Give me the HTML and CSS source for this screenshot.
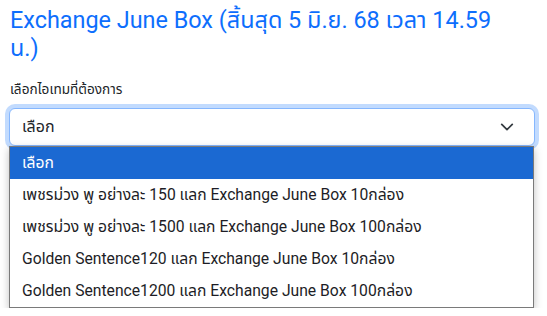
FILE: index.html
```html
<!DOCTYPE html>
<html lang="th">
<head>
    <meta charset="UTF-8">
    <meta name="viewport" content="width=device-width, initial-scale=1.0">
    <title>Exchange June Box</title>
    <link rel="stylesheet" href="styles.css">
</head>
<body>

<div class="container">
    <h4 class="title">Exchange June Box (สิ้นสุด 5 มิ.ย. 68 เวลา 14.59 น.)</h4>

    <!-- Item picker, shown with its list open -->
    <label class="field-label" for="item">เลือกไอเทมที่ต้องการ</label>
    <div class="select-wrap">
        <div class="select is-focused" id="item">
            <span>เลือก</span>
            <svg class="chevron" width="16" height="16" viewBox="0 0 16 16">
                <path d="M2 5l6 6 6-6" fill="none" stroke="#343a40" stroke-width="2" stroke-linecap="round" stroke-linejoin="round"/>
            </svg>
        </div>
        <ul class="options">
            <li class="option is-active">เลือก</li>
            <li class="option">เพชรม่วง พู อย่างละ 150 แลก Exchange June Box 10กล่อง</li>
            <li class="option">เพชรม่วง พู อย่างละ 1500 แลก Exchange June Box 100กล่อง</li>
            <li class="option">Golden Sentence120 แลก Exchange June Box 10กล่อง</li>
            <li class="option">Golden Sentence1200 แลก Exchange June Box 100กล่อง</li>
        </ul>
    </div>
</div>

</body>
</html>
```

FILE: styles.css
```css
body {
    margin: 0;
    padding: 0;
    background-color: #ffffff;
    font-family: "Roboto", "Noto Sans Thai", "Noto Sans", sans-serif;
    color: #212529;
}

.container {
    padding: 6px 12px 0 9px;
}

.title {
    max-width: 500px;
    margin: 0 0 18px 1px;
    font-size: 23.4px;
    font-weight: 400;
    line-height: 28px;
    color: #0d6efd;
}

.field-label {
    display: block;
    margin: 0 0 8px 1px;
    font-size: 13.6px;
}

.select {
    display: flex;
    align-items: center;
    justify-content: space-between;
    height: 38px;
    padding: 0 20px 0 12px;
    border: 1px solid #86b7fe;
    border-radius: 6px;
    box-sizing: border-box;
    font-size: 16px;
    background: #fff;
}

.select.is-focused {
    box-shadow: 0 0 0 4px rgba(13, 110, 253, 0.25);
}

.chevron {
    width: 14px;
    height: 14px;
}

.options {
    margin: 0 1px 0 0;
    padding: 0;
    list-style: none;
    background: #fff;
    border: 1px solid #7a7a7a;
    box-shadow: 0 3px 8px rgba(0, 0, 0, 0.25);
}

.option {
    height: 32px;
    line-height: 32px;
    padding: 0 12px;
    font-size: 15.7px;
    color: #1d1d26;
    white-space: nowrap;
}

.option.is-active {
    background-color: #1b69d2;
    color: #fff;
}
```
